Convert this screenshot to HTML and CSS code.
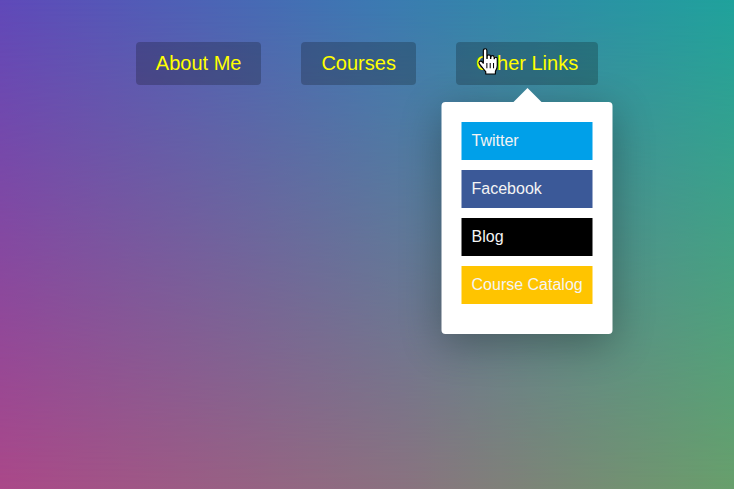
FILE: index.html
```html
<!DOCTYPE html>
<html>
<head>
<meta charset="utf-8">
<link rel="stylesheet" href="styles.css">
</head>
<body>
<div class="bg-top"></div>
<nav class="nav">
  <div class="nav-item"><a class="nav-link" href="#">About Me</a></div>
  <div class="nav-item"><a class="nav-link" href="#">Courses</a></div>
  <div class="nav-item">
    <a class="nav-link" href="#">Other Links</a>
    <div class="dropdown">
      <a class="dd-link twitter" href="#">Twitter</a>
      <a class="dd-link facebook" href="#">Facebook</a>
      <a class="dd-link blog" href="#">Blog</a>
      <a class="dd-link catalog" href="#">Course Catalog</a>
    </div>
    <svg class="cursor" width="21" height="27" viewBox="0 0 20 26">
      <path d="M6 2.5c0-1.1.8-1.8 1.7-1.8s1.7.7 1.7 1.8V10h.3V8.2c0-1 .8-1.6 1.6-1.6s1.6.6 1.6 1.6V10h.3V9c0-1 .8-1.6 1.6-1.6s1.6.6 1.6 1.6v1.3h.2c0-.9.7-1.4 1.4-1.4s1.4.6 1.4 1.5V17c0 2.6-.8 4-1.8 5.5V25H8.3v-2.2C6.6 21 4.7 18.6 2.4 15.6c-.7-.9-.8-2 0-2.6.9-.7 2-.3 2.7.6L6 14.7Z" fill="#fff" stroke="#000" stroke-width="1.1" stroke-linejoin="round"/>
      <path d="M9.4 14.5v5M12.6 14.5v5M15.8 14.5v5" stroke="#000" stroke-width="1"/>
    </svg>
  </div>
</nav>
</body>
</html>
```
FILE: styles.css
```css
html, body {
  margin: 0;
  height: 100%;
}
body {
  position: relative;
  overflow: hidden;
  font-family: "Liberation Sans", Arial, sans-serif;
  background: linear-gradient(to right, #ab4889 0%, #8a7380 55%, #68a06c 100%);
}
.bg-top {
  position: absolute;
  inset: 0;
  background: linear-gradient(to right, #5f49b9 0%, #3c78b2 50%, #1fa29c 100%);
  -webkit-mask-image: linear-gradient(to bottom, #000 0%, rgba(0,0,0,0.55) 45%, rgba(0,0,0,0) 100%);
  mask-image: linear-gradient(to bottom, #000 0%, rgba(0,0,0,0.55) 45%, rgba(0,0,0,0) 100%);
}
.nav {
  position: relative;
  display: flex;
  justify-content: center;
  gap: 40px;
  padding-top: 42px;
}
.nav-item {
  position: relative;
}
.nav-link {
  display: block;
  padding: 10px 20px;
  line-height: 23px;
  font-size: 20px;
  color: #ffff00;
  text-decoration: none;
  background: rgba(0, 0, 0, 0.22);
  border-radius: 4px;
}
.dropdown {
  position: absolute;
  top: 60px;
  left: 50%;
  transform: translateX(-50%);
  width: 131px;
  padding: 20px 20px 30px;
  background: #fff;
  border-radius: 4px;
  display: flex;
  flex-direction: column;
  gap: 10px;
  box-shadow: 0 10px 40px rgba(0, 0, 0, 0.3);
}
.dropdown::before {
  content: "";
  position: absolute;
  top: -14px;
  left: 50%;
  margin-left: -14px;
  border-left: 14px solid transparent;
  border-right: 14px solid transparent;
  border-bottom: 14px solid #fff;
}
.dd-link {
  display: block;
  height: 38px;
  line-height: 38px;
  padding-left: 10px;
  font-size: 16px;
  color: #f4f4f4;
  text-decoration: none;
}
.twitter { background: #00a0e9; }
.facebook { background: #3b5998; }
.blog { background: #000; }
.catalog { background: #ffc400; }
.cursor {
  position: absolute;
  left: 21px;
  top: 6px;
}
```
